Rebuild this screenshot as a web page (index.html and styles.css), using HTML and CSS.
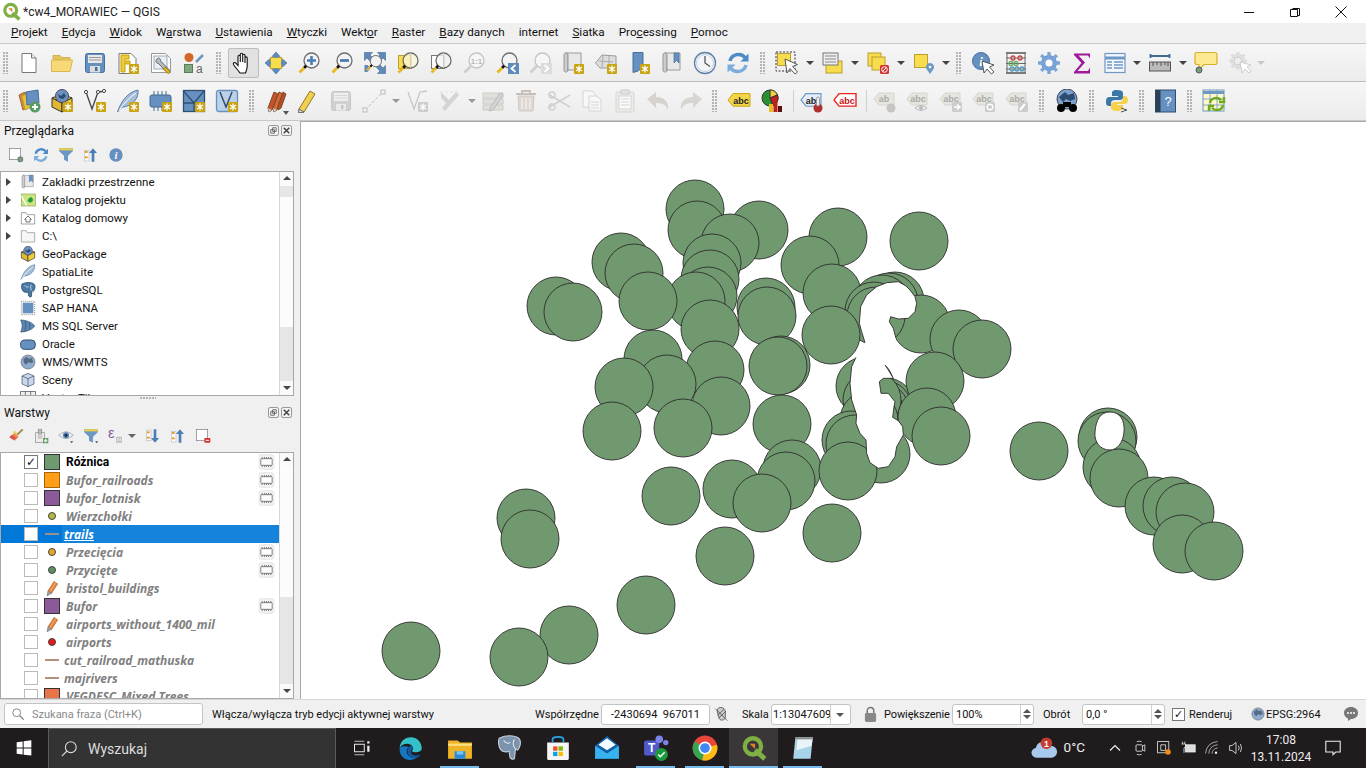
FILE: index.html
```html
<!DOCTYPE html>
<html lang="pl">
<head>
<meta charset="utf-8">
<title>*cw4_MORAWIEC — QGIS</title>
<link rel="stylesheet" href="styles.css">
</head>
<body>
<svg class="defs" viewBox="0 0 24 24" aria-hidden="true"><defs>
<g id="badge"><rect x="13" y="13" width="10" height="10" rx="1" fill="#c8a415"/><path d="M18 14.5v7M15 16l6 4M21 16l-6 4" stroke="#fff" stroke-width="1.3"/></g>
<g id="new"><path d="M5 2.5h9.5l4.500 4.500v14.500H5z" fill="#fff" stroke="#777"/><path d="M14.5 2.5V7H19" fill="#eee" stroke="#777"/></g>
<g id="open"><path d="M3 8V4.5h7l2 2h8V10z" fill="#e6c65c" stroke="#d0b050"/><path d="M1.5 20.5V9h21l-2.500 11.500z" fill="#f7d978" stroke="#dab94e"/></g>
<g id="save"><rect x="2.5" y="2.5" width="19" height="19" rx="2" fill="#6590c0" stroke="#44709f"/><rect x="5" y="4" width="14" height="8" fill="#e8e8e8"/><path d="M6 6.500h12M6 9h12" stroke="#999"/><rect x="7" y="15" width="10" height="6.500" fill="#ddd"/><rect x="12" y="16" width="2.500" height="4" fill="#44709f"/></g>
<g id="saveas"><path d="M3 2.500h12l5 5v15H3z" fill="#fff" stroke="#777"/><path d="M5 4h8v4H9v13H5z" fill="#f0c93f" stroke="#c9a200"/><path d="M10 10h4v3h-4z" fill="#f0c93f" stroke="#c9a200"/><use href="#badge"/></g>
<g id="props"><path d="M2.500 2.500h14l5 5v14h-19z" fill="#fff" stroke="#999"/><rect x="5" y="5" width="13" height="13" fill="#eaf0f8" stroke="#9ab"/><path d="M8 8c2-2 4 0 3.500 2l9 9-2 3-9-9.500C7.500 13 6 10 8 8z" fill="#bbb" stroke="#666"/><path d="M16 16l5 5-1.500 2-5-5z" fill="#e8b820" stroke="#a80"/></g>
<g id="style"><circle cx="7" cy="6.500" r="4.500" fill="#d4662b"/><path d="M14 11l7-7" stroke="#6d97c4" stroke-width="2.500"/><rect x="2.500" y="13.500" width="8" height="8" fill="#80a880" stroke="#5a7a5a"/><text x="14" y="22" class="svgt" font-size="12" fill="#666">a</text></g>
<g id="pan"><path d="M9 22c-2-3-5-6-6.500-8.500-.7-1.500 1-2.700 2.200-1.500L7 14.500V5.500c0-1.600 2.300-1.600 2.300 0V11 3.500c0-1.600 2.400-1.600 2.400 0V11 4.500c0-1.600 2.300-1.600 2.300 0V12 7c0-1.500 2.200-1.500 2.200 0v8c0 3-.8 4.500-1.700 7z" fill="#fff" stroke="#111" stroke-width="1.100"/></g>
<g id="pansel"><rect x="6.500" y="6.500" width="11" height="11" fill="#f7dc4e" stroke="#b9a030"/><path d="M12 1l4 4.500H8zM12 23l4-4.500H8zM1 12l4.500-4v8zM23 12l-4.500-4v8z" fill="#5e8abb" stroke="#3f6a9a" stroke-width=".6"/><path d="M10.500 5h3v2h-3zM10.500 17h3v2h-3zM5 10.500h2v3H5zM17 10.500h2v3h-2z" fill="#5e8abb"/></g>
<g id="lens"><circle cx="14.500" cy="9.500" r="7.500" fill="#f3f3f3" stroke="#6e6e6e" stroke-width="1.300"/><path d="M9.200 14.800L7 17" stroke="#111" stroke-width="2.800"/><path d="M7 17L2.500 21.500" stroke="#e8b820" stroke-width="2.800"/></g>
<g id="lensg"><circle cx="14.500" cy="9.500" r="7.500" fill="#f6f6f6" stroke="#c4c4c4" stroke-width="1.300"/><path d="M9.200 14.800L2.500 21.500" stroke="#cfcfcf" stroke-width="2.800"/></g>
<g id="zin"><use href="#lens"/><path d="M14.500 5v9M10 9.500h9" stroke="#4a7fb5" stroke-width="2.600"/></g>
<g id="zout"><use href="#lens"/><path d="M10 9.500h9" stroke="#4a7fb5" stroke-width="2.800"/></g>
<g id="zfull"><path d="M1.500 1.500h8L7 4l3.500 3.500-3 3L4 7 1.500 9.500zM22.500 1.500h-8L17 4l-3.500 3.500 3 3L20 7l2.500 2.500zM22.500 22.500h-8L17 20l-3.500-3.500 3-3L20 17l2.500-2.500z" fill="#5e8abb" stroke="#3f6a9a" stroke-width=".6"/><path d="M1.500 14h3l3 3-3 4H1.500z" fill="#5e8abb"/><g transform="translate(2 3) scale(.75)"><use href="#lens"/></g></g>
<g id="zsel"><rect x="2.500" y="4.500" width="13" height="13" fill="#f7dc4e" stroke="#b9a030"/><circle cx="14.500" cy="9.500" r="7.500" fill="#fbf6d8" fill-opacity=".8" stroke="#6e6e6e" stroke-width="1.300"/><path d="M14.500 2v15" stroke="#ccc"/><path d="M9.200 14.800L7 17" stroke="#111" stroke-width="2.800"/><path d="M7 17L2.500 21.500" stroke="#e8b820" stroke-width="2.800"/></g>
<g id="zlay"><rect x="2.500" y="4.500" width="13" height="13" fill="#fff" stroke="#777"/><circle cx="14.500" cy="9.500" r="7.500" fill="#f3f3f3" fill-opacity=".8" stroke="#6e6e6e" stroke-width="1.300"/><path d="M14.500 2v15" stroke="#ccc"/><path d="M9.200 14.800L7 17" stroke="#111" stroke-width="2.800"/><path d="M7 17L2.500 21.500" stroke="#e8b820" stroke-width="2.800"/></g>
<g id="z11"><use href="#lensg"/><text x="14.500" y="12.500" class="svgt b7" text-anchor="middle" fill="#bbb">1:1</text></g>
<g id="zlast"><use href="#lens"/><rect x="13" y="12" width="11" height="11" fill="#5e8abb"/><path d="M20.500 14l-4 3.500 4 3.500" fill="none" stroke="#fff" stroke-width="1.800"/></g>
<g id="znext"><use href="#lensg"/><rect x="13" y="12" width="11" height="11" fill="#dcdcdc"/><path d="M16.500 14l4 3.500-4 3.500" fill="none" stroke="#fff" stroke-width="1.800"/></g>
<g id="scroll"><path d="M3 4c0-3 4-3 4 0v15c0 2-2 3-4 1z" fill="#ccc" stroke="#999"/><path d="M5 2h15v17H6c2 0 1-1 1-1V4c0-2-2-2-2-2z" fill="#e8e8e8" stroke="#999"/></g>
<g id="bnew"><use href="#scroll"/><use href="#badge"/></g>
<g id="bmap"><path d="M1.500 12L8 4l14 1v12H6z" fill="#ddd" stroke="#999"/><path d="M5 10l14 1M9 5l-1 11M15 5v11" stroke="#aaa"/><use href="#badge"/></g>
<g id="bflag"><path d="M6 1.500h10V16l-5 4-5 1.500z" fill="#6590c0" stroke="#44709f"/><use href="#badge"/></g>
<g id="bshow"><use href="#scroll"/><path d="M14 2h5v10l-2.500-2.500L14 12z" fill="#6590c0" stroke="#44709f" stroke-width=".7"/></g>
<g id="clock"><circle cx="12" cy="12" r="10.500" fill="#f3f5f8" stroke="#5b7fa5" stroke-width="1.300"/><circle cx="12" cy="12" r="8.500" fill="none" stroke="#c5d2e0"/><path d="M12 5v7l5 3.500" fill="none" stroke="#555" stroke-width="1.300"/></g>
<g id="refresh"><path d="M4 10c1.500-7 11-9 15.500-3" fill="none" stroke="#4d8bc8" stroke-width="3.500"/><path d="M22.500 2.500v8h-8z" fill="#4d8bc8"/><path d="M20 14c-1.500 7-11 9-15.500 3" fill="none" stroke="#7daedb" stroke-width="3.500"/><path d="M1.500 21.500v-8h8z" fill="#7daedb"/></g>
<g id="sel"><rect x="1" y="1" width="19" height="19" fill="none" stroke="#333" stroke-dasharray="2 1.500"/><rect x="2.500" y="2.500" width="13" height="12" fill="#f7dc4e" stroke="#b9a030"/><path d="M10 8l2 14 3-4.500 5 5.500 2.500-2-5-5.500 5-2z" fill="#fff" stroke="#444" stroke-width=".9"/></g>
<g id="selform"><rect x="5" y="10" width="16" height="12" fill="#f7dc4e" stroke="#b9a030"/><rect x="2" y="2" width="15" height="12" fill="#eee" stroke="#777"/><path d="M4 5h11M4 8h11M4 11h11" stroke="#888"/></g>
<g id="desel"><rect x="2" y="2" width="13" height="13" fill="#f7dc4e" stroke="#b9a030"/><rect x="6" y="6" width="13" height="13" fill="#f7dc4e" stroke="#b9a030"/><rect x="14" y="14" width="9" height="9" rx="1.500" fill="#d5332f"/><circle cx="18.500" cy="18.500" r="2.800" fill="none" stroke="#fff"/><path d="M16.500 20.500l4-4" stroke="#fff"/></g>
<g id="selloc"><rect x="2.500" y="3.500" width="13" height="13" fill="#f7dc4e" stroke="#b9a030"/><path d="M18 23l-3.500-5a4 4 0 1 1 7 0z" fill="#6d97c4"/><circle cx="18" cy="16" r="1.300" fill="#fff"/></g>
<g id="ident"><circle cx="10" cy="10" r="8.500" fill="#6590c0" stroke="#44709f"/><text x="10" y="14.500" class="svgt i12" text-anchor="middle" fill="#fff">i</text><path d="M11 10l2 12 3-4 4.500 5 2.500-2-4.500-5 4.500-2z" fill="#fff" stroke="#444" stroke-width=".9"/></g>
<g id="abacus"><path d="M2 2h20M2 22h20" stroke="#555" stroke-width="1.500"/><path d="M3 2v20M21 2v20M2 7h20M2 12.500h20M2 18h20" stroke="#666"/><g fill="none" stroke-width="1.300"><circle cx="9" cy="7" r="2" stroke="#c44"/><circle cx="16" cy="7" r="2" stroke="#c44"/><circle cx="7" cy="12.500" r="2" stroke="#6a6"/><circle cx="12" cy="12.500" r="2" stroke="#6a6"/><circle cx="8" cy="18" r="2" stroke="#59b"/><circle cx="13" cy="18" r="2" stroke="#59b"/><circle cx="18" cy="18" r="2" stroke="#59b"/></g></g>
<g id="gear"><circle cx="12" cy="12" r="7.500" fill="#7aa3d8" stroke="#6a93c8"/><path d="M12 1v22M1 12h22M4.200 4.200l15.600 15.600M19.800 4.200L4.200 19.800" stroke="#7aa3d8" stroke-width="3.300"/><circle cx="12" cy="12" r="3.500" fill="#fff"/></g>
<g id="sigma"><path d="M4 2.500h16v5l-2-3H8.500l6.500 7-7.500 8.500H18l2-3.500v6H4v-1.500l7.500-9L4 4z" fill="#a0179c"/></g>
<g id="table"><rect x="2" y="2.500" width="20" height="19" fill="#f4f8fc" stroke="#6d97c4" stroke-width="1.200"/><path d="M2 7h20" stroke="#6d97c4" stroke-width="3"/><path d="M4 11h5M11 11h9M4 14h5M11 14h9M4 17h5M11 17h9" stroke="#6d97c4" stroke-width="1.300"/></g>
<g id="ruler"><path d="M2.500 5h19M2.500 3v4M21.500 3v4" stroke="#44688f" stroke-width="1.800"/><rect x="1.500" y="11" width="21" height="9" fill="#bbb" stroke="#555"/><path d="M5 11v4M9 11v3M13 11v4M17 11v3M20 11v4" stroke="#555"/></g>
<g id="bubble"><path d="M3 1.500h18q2 0 2 2v8q0 2-2 2H10l-5 5v-5H3q-2 0-2-2v-8q0-2 2-2z" fill="#fde992" stroke="#d8b030" stroke-width="1.200"/><circle cx="5" cy="19" r="3" fill="#75a070" stroke="#557"/></g>
<g id="gearg"><circle cx="11" cy="10" r="6.500" fill="#eee" stroke="#ccc"/><path d="M11 1v18M2 10h18M4.500 3.500l13 13M17.500 3.500l-13 13" stroke="#ddd" stroke-width="3"/><circle cx="11" cy="10" r="4" fill="#eee" stroke="#ccc"/><path d="M13 11l2 11 3-4 4 4 2-2-4-4 4-2z" fill="#fff" stroke="#ccc"/></g>
<g id="addlay"><path d="M2 6l6-3 4 15-6 3z" fill="#d38a3a" stroke="#a5652a"/><path d="M5 7l7-3 2 14-6 3z" fill="#e9c23c" stroke="#b9a030"/><path d="M9 3l12-2 1 13-12 2z" fill="#6590c0" stroke="#44709f"/><circle cx="18" cy="18" r="5.500" fill="#5a9a64"/><path d="M18 15v6M15 18h6" stroke="#fff" stroke-width="1.800"/></g>
<g id="gpkg"><path d="M2 9l10-4 10 4-10 5z" fill="#f7dc4e" stroke="#333"/><path d="M2 9v9l10 5V14z" fill="#e2b92e" stroke="#333"/><path d="M22 9v9l-10 5V14z" fill="#f2d03c" stroke="#333"/><circle cx="12" cy="7" r="6.500" fill="#6e92c0" stroke="#446"/><path d="M8 5l3 2 3-3 2 3-3 3-4-1z" fill="#2d4a70"/></g>
<g id="vtx"><path d="M3 3l6 17 6-17 7-1" fill="none" stroke="#444" stroke-width="1.300"/><g fill="#fff" stroke="#444"><circle cx="3" cy="3" r="1.600"/><circle cx="15" cy="3" r="1.600"/><circle cx="21" cy="2" r="1.600"/></g><use href="#badge"/></g>
<g id="feather"><path d="M1.500 23C5 12 12 3 22 1c1 8-5 16-15 17-1 0-3 2-5.500 5z" fill="#a5bdd8" stroke="#5b7fa5"/><path d="M3 21.500C8 14 13 9 20 4" stroke="#fff" fill="none"/></g>
<g id="spatial"><use href="#feather"/><use href="#badge"/></g>
<g id="chip"><path d="M5 2v20M9 2v20M13 2v20M17 2v20" stroke="#44688f"/><rect x="1" y="6" width="21" height="12" rx="2" fill="#6590c0" stroke="#44688f"/></g>
<g id="chipb"><use href="#chip"/><use href="#badge"/></g>
<g id="grid"><rect x="1.500" y="1.500" width="21" height="21" fill="#6590c0" stroke="#2f4f70" stroke-width="1.300"/><path d="M1.500 14h21M12 14v8M1.500 2l10.500 12M12 14L22 2" stroke="#2f4f70" stroke-width="1.300"/><use href="#badge"/></g>
<g id="vtxbox"><rect x="1.500" y="1.500" width="21" height="21" rx="2" fill="#bcd0e6" stroke="#6590c0" stroke-width="1.300"/><path d="M5 3l6 15 6-15" fill="none" stroke="#2f4f70" stroke-width="1.500"/><use href="#badge"/></g>
<g id="pencils"><g stroke="#7a4a2a"><path d="M4 19L10 3l4 2-6 16-3 2z" fill="#c8522b"/><path d="M9 19L15 3l4 2-6 16-3 2z" fill="#d9692f"/><path d="M14 17L19 3l3 2-5 14-3 2z" fill="#b84a28"/></g><path d="M4 19l1 4 3-2zM9 19l1 4 3-2z" fill="#ccc"/></g>
<g id="pencil"><path d="M3 20L14 2l5 3-11 18-5 1z" fill="#f0cf52" stroke="#907a20"/><path d="M3 20l-.5 4 5.500-1z" fill="#ddd" stroke="#666"/></g>
<g id="line"><path d="M3 21L21 3" stroke="#bbb" stroke-dasharray="3 2"/><rect x="1" y="19" width="4" height="4" fill="#f4f4f4" stroke="#bbb"/><rect x="19" y="1" width="4" height="4" fill="#f4f4f4" stroke="#bbb"/></g>
<g id="vtxg"><path d="M3 3l6 17 6-17 7-1" fill="none" stroke="#c8c8c8" stroke-width="1.300"/><rect x="13" y="13" width="10" height="10" rx="1" fill="#ccc"/><path d="M18 14.500v7M15 16l6 4M21 16l-6 4" stroke="#fff" stroke-width="1.300"/></g>
<g id="tools"><path d="M3 3l9 9-3 3-6-6z" fill="#d4d4d4"/><path d="M18 3l-14 16 3 3 14-16z" fill="#d4d4d4"/><path d="M2 3h18" stroke="#ddd" stroke-dasharray="3 2"/></g>
<g id="edit"><path d="M2 4h20v5H2zM2 10h20v5H2zM2 16h20v5H2z" fill="#e0e0d8" stroke="#ccc"/><path d="M9 19l10-15 3 2-10 15-4 1z" fill="#d4d4d4" stroke="#bbb"/></g>
<g id="trash"><path d="M2 5h20M8 5V2h8v3" fill="none" stroke="#c8c0b8" stroke-width="1.800"/><path d="M4 7h16l-1 15H5z" fill="#e0d8d0" stroke="#ccc"/><path d="M8 9v11M12 9v11M16 9v11" stroke="#f0f0f0" stroke-width="1.300"/></g>
<g id="scissors"><path d="M1 5l22 13M1 19L23 6" stroke="#d0d0d0" stroke-width="1.600"/><circle cx="5" cy="6" r="3" fill="none" stroke="#d0d0d0" stroke-width="1.400"/><circle cx="5" cy="18" r="3" fill="none" stroke="#d0d0d0" stroke-width="1.400"/></g>
<g id="copy"><path d="M3 2h9l3 3v13H3z" fill="#f8f8f8" stroke="#d4d4d4"/><path d="M9 7h8l4 4v11H9z" fill="#f8f8f8" stroke="#d4d4d4"/><path d="M11 13h8M11 16h8M11 19h8" stroke="#d4d4d4"/></g>
<g id="paste"><rect x="3" y="3" width="18" height="20" rx="1.500" fill="#ecece4" stroke="#d4d4d4"/><rect x="8" y="1" width="8" height="4" fill="#e4e4e4" stroke="#ccc"/><rect x="6" y="7" width="12" height="13" fill="#fafafa" stroke="#d4d4d4"/><path d="M8 10h8M8 13h8M8 16h8" stroke="#d4d4d4"/></g>
<g id="undo"><path d="M1 10L10 3v5c8 0 13 4 12 13-2-5-5-7-12-7v5z" fill="#d6d3cf"/></g>
<g id="redo"><path d="M23 10L14 3v5C6 8 1 12 2 21c2-5 5-7 12-7v5z" fill="#d8d4d0"/></g>
<g id="lblY"><path d="M6 4h17v14H6L1 11z" fill="#f3d54a" stroke="#c9a200" transform="translate(0 1) scale(1 .9)"/><text x="14" y="15" class="svgt b9" text-anchor="middle" fill="#222">abc</text></g>
<g id="lblR"><path d="M6 4h17v14H6L1 11z" fill="#fff" stroke="#e22" stroke-width="1.400" transform="translate(0 1) scale(1 .9)"/><text x="14" y="15" class="svgt b9" text-anchor="middle" fill="#c11">abc</text></g>
<g id="lblB"><path d="M6 4h15v14H6L1 11z" fill="#e5eef8" stroke="#6d97c4" stroke-width="1.200" transform="translate(0 1) scale(1 .9)"/><text x="11" y="15" class="svgt b9" text-anchor="middle" fill="#222">ab</text><circle cx="18" cy="19" r="4.500" fill="#b0302e"/><rect x="16.500" y="8" width="3" height="9" rx="1.500" fill="#eee" stroke="#999"/></g>
<g id="pie"><circle cx="10" cy="9" r="8" fill="#2a9030" stroke="#333"/><path d="M10 9V1a8 8 0 0 1 7.500 5z" fill="#f0d040" stroke="#333"/><path d="M10 9l7.500-3A8 8 0 0 1 13 16.500z" fill="#c02020" stroke="#333"/><rect x="9" y="15" width="4" height="8" fill="#e8c020"/><rect x="13.500" y="11" width="4" height="12" fill="#c02020"/><rect x="18" y="17" width="4" height="6" fill="#5a1010"/></g>
<g id="lblG"><path d="M6 4h15v12H6L1 10z" fill="#e6e6de" stroke="#d4d4cc"/><text x="12" y="13" class="svgt b9" text-anchor="middle" fill="#aaa">abc</text></g>
<g id="lblG1"><path d="M6 4h15v12H6L1 10z" fill="#e6e6de" stroke="#d4d4cc"/><text x="11" y="13" class="svgt b9" text-anchor="middle" fill="#aaa">ab</text><circle cx="18" cy="19" r="4.500" fill="#c8c4c0"/></g>
<g id="lblG2"><use href="#lblG"/><path d="M9 19q6-5 12 0-6 5-12 0z" fill="#eee" stroke="#bbb"/><circle cx="15" cy="19" r="2" fill="#bbb"/></g>
<g id="lblG3"><use href="#lblG"/><rect x="13" y="13" width="10" height="10" rx="1.500" fill="#ccc"/><path d="M15 18h5M18 15.500l3 2.500-3 2.500" fill="none" stroke="#fff" stroke-width="1.600"/></g>
<g id="lblG4"><use href="#lblG"/><rect x="13" y="13" width="10" height="10" rx="1.500" fill="#ccc"/><circle cx="18" cy="18" r="2.800" fill="none" stroke="#fff" stroke-width="1.400"/></g>
<g id="lblG5"><use href="#lblG"/><rect x="13" y="13" width="10" height="10" rx="1.500" fill="#ccc"/><path d="M15 21l5-6" stroke="#fff" stroke-width="2"/></g>
<g id="binoc"><circle cx="12" cy="10" r="10" fill="#7ca0cc" stroke="#445"/><path d="M4 8l6-5 3 3 6-2 1 6-5 2-4-2-3 3z" fill="#2d4a70"/><circle cx="6" cy="19" r="4" fill="#000"/><circle cx="18" cy="19" r="4" fill="#000"/><rect x="8" y="13" width="8" height="5" fill="#000"/></g>
<g id="python"><path d="M12 1c-5 0-5 2-5 3v3h6v1H4c-3 0-3 4-3 5s0 4 3 4h2v-3c0-2 2-3 4-3h5c2 0 3-1 3-3V4c0-2-2-3-6-3z" fill="#3b78a8"/><path d="M12 22c5 0 6-2 6-3v-3h-6v-1h8c3 0 3-4 3-4s0-4-3-4h-2v3c0 2-2 3-4 3h-4c-2 0-4 1-4 3v3c0 2 2 3 6 3z" fill="#f6d24c"/><path d="M16 19l6 2-6 2" fill="none" stroke="#555"/></g>
<g id="help"><rect x="1.500" y="1" width="20" height="22" fill="#6590c0" stroke="#2f4f70"/><rect x="1.500" y="1" width="5" height="22" fill="#2b3f55"/><text x="14" y="17" class="svgt" font-size="13" text-anchor="middle" fill="#fff">?</text></g>
<g id="tblsync"><rect x="1" y="1" width="21" height="21" fill="#fff6cc" stroke="#6d97c4"/><path d="M1 3.500h21" stroke="#6d97c4" stroke-width="3"/><path d="M1 10h21M1 16h21M8 1v21M15 1v21" stroke="#6d97c4" stroke-width=".8"/><path d="M8 14c1-6 8-6 11-3M22 8v5h-5M21 16c-1 6-8 6-11 3M7 22v-5h5" fill="none" stroke="#6cab1d" stroke-width="2.400"/></g>
<g id="newgeo"><rect x="2" y="2" width="17" height="17" fill="#fff" stroke="#777"/><rect x="15" y="15" width="7" height="7" rx="2" fill="#75a070" stroke="#557"/></g>
<g id="filter"><path d="M1.500 2h21v4L15 13v9l-6-3v-6L1.500 6z" fill="#6d97c4"/><path d="M1.500 2h21v3h-21z" fill="#f0d040"/></g>
<g id="collapse"><rect x="2" y="5" width="7" height="16" fill="#fff" stroke="#bbb"/><rect x="3" y="6" width="4" height="3" fill="#e89a30"/><rect x="3" y="14" width="4" height="3" fill="#e89a30"/><path d="M15 2l6 7h-4v13h-4V9H9z" fill="#4a7fb5"/></g>
<g id="expand"><rect x="2" y="3" width="7" height="16" fill="#fff" stroke="#bbb"/><rect x="3" y="5" width="4" height="3" fill="#e89a30"/><rect x="3" y="13" width="4" height="3" fill="#e89a30"/><path d="M15 22l6-7h-4V2h-4v13H9z" fill="#4a7fb5"/></g>
<g id="info"><circle cx="12" cy="12" r="10" fill="#6590c0"/><text x="12" y="17.500" class="svgt i15" text-anchor="middle" fill="#fff">i</text></g>
<g id="brush"><path d="M2 14l8-7 6 6-6 6z" fill="#e8884a"/><path d="M2 14l4-4 6 5-3 3z" fill="#e05050"/><path d="M7 6l3-2 5 5-2 2z" fill="#e8d060"/><path d="M14 10L22 2" stroke="#a8864a" stroke-width="3"/></g>
<g id="addgrp"><rect x="4" y="7" width="13" height="15" fill="#eee" stroke="#888"/><path d="M8 2h5v7H8z" fill="#bbb" stroke="#888"/><path d="M7 12h7M7 15h7" stroke="#888"/><rect x="15" y="15" width="8" height="8" fill="#6aa06a"/><path d="M19 16.500v5M16.500 19h5" stroke="#fff" stroke-width="1.600"/></g>
<g id="eye"><path d="M1 11q11-11 22 0-11 10-22 0z" fill="#e8eef5" stroke="#999"/><circle cx="12" cy="11" r="4.500" fill="#4a7fb5"/><circle cx="12" cy="11" r="2" fill="#223"/><path d="M18 20h5l-2.500 3z" fill="#555"/></g>
<g id="filtd"><use href="#filter"/><path d="M18 20h5l-2.500 3z" fill="#555"/></g>
<g id="eps"><text x="0" y="15" class="svgt eps" fill="#8a5a9a">ε</text><rect x="12" y="13" width="9" height="9" rx="1" fill="#bbb"/><path d="M14 15v5M16.500 15v5M19 15v5" stroke="#fff"/></g>
<g id="remlay"><rect x="2" y="2" width="17" height="17" fill="#fff" stroke="#777"/><rect x="14" y="15" width="9" height="7" rx="1" fill="#d5332f"/><path d="M16 18.500h5" stroke="#fff" stroke-width="1.500"/></g>
<g id="folder"><path d="M2 4h7l2 3h11v14H2z" fill="#f6f6f6" stroke="#888"/></g>
<g id="home"><path d="M2 4h7l2 3h11v14H2z" fill="#fff" stroke="#777"/><path d="M12 9l-5 5h2v4h6v-4h2z" fill="#fff" stroke="#333"/></g>
<g id="proj"><rect x="2" y="3" width="21" height="18" fill="#cbe382" stroke="#8aa54a"/><path d="M2 6l8 14" stroke="#fff" stroke-width="2"/><path d="M13 10q4-4 6 0t-4 6l-4-3z" fill="#1f9a3a"/></g>
<g id="elephant"><path d="M3 3c6-3 14-3 18 0 3 3 1 9-1 11l-2-1-1 9c-2 1-3 0-4-1l-1-6c-2 1-6 1-8-2-2-3-2-8-1-10z" fill="#4a7ba8" stroke="#1d3650"/><path d="M17 4c-2 3-1 7 1 9M7 5c2 3 4 3 6 2" fill="none" stroke="#fff"/></g>
<g id="elephantg"><path d="M3 3c6-3 14-3 18 0 3 3 1 9-1 11l-2-1-1 9c-2 1-3 0-4-1l-1-6c-2 1-6 1-8-2-2-3-2-8-1-10z" fill="#7b93ad" stroke="#c8d2dc"/><path d="M17 4c-2 3-1 7 1 9M7 5c2 3 4 3 6 2" fill="none" stroke="#dde4ea"/></g>
<g id="hana"><rect x="4" y="4" width="16" height="16" fill="#6590c0"/><rect x="2" y="2" width="20" height="20" fill="none" stroke="#555" stroke-dasharray="1.500 1.500"/></g>
<g id="mssql"><path d="M1 3c7 0 17 3 21 9-4 6-14 9-21 9 3-6 3-12 0-18z" fill="#5f87b5" stroke="#2f4f70"/><path d="M7 4c2 5 2 11 0 16M14 7c1 3 1 7 0 10" fill="none" stroke="#2f4f70"/></g>
<g id="oracle"><rect x="1" y="6" width="22" height="14" rx="6" fill="#6590c0" stroke="#2f4f70" stroke-width="1.500"/></g>
<g id="wms"><circle cx="12" cy="12" r="10.500" fill="#8fabcf" stroke="#666"/><path d="M5 8l5-4 3 3 5-1 2 6-4 2-3-2-4 4-3-3z" fill="#556a85"/></g>
<g id="cube"><path d="M12 2l9 4v12l-9 4-9-4V6z" fill="#c8d8ea" stroke="#446"/><path d="M3 6l9 4 9-4M12 10v12" fill="none" stroke="#446"/></g>
<g id="vt"><rect x="1" y="2" width="22" height="7" fill="#eee" stroke="#445"/><path d="M8 2v7M16 2v7" stroke="#445"/></g>
<g id="edpen"><path d="M15 1.500l5.500 3.500-9 14-5.500-3.500z" fill="#e8833a" stroke="#a5652a"/><path d="M17.500 3L8.500 17.500" stroke="#f5c9a0"/><path d="M6 15.500l5.500 3.500L4.500 23z" fill="#a0a0a0" stroke="#777"/></g>
<g id="mem"><rect x="1" y="1" width="22" height="22" rx="3" fill="#f2f2f2" stroke="#ddd"/><path d="M5.500 4.500v3M9 4.500v3M12 4.500v3M15 4.500v3M18.500 4.500v3M5.500 16.500v3M9 16.500v3M12 16.500v3M15 16.500v3M18.500 16.500v3" stroke="#666" stroke-width="1.200"/><rect x="3.500" y="7" width="17" height="10" rx="1" fill="#fdfdfd" stroke="#666" stroke-width="1.200"/></g>
<g id="edge"><path d="M22 13c0-6-4-11-10-11C6 2 2 6 1.500 12c3-5 10-5 12-1 1 2 0 3-1 4 2 1 8 2 9.500-2z" fill="#35c1c8"/><path d="M1.500 12C1 18 5 23 11 23c2 0 4-.5 6-2-5 1-9-2-9-6 0-2 1-3 2-4-3-1-7-1-8.500 1z" fill="#1577c2"/><path d="M10 11c-2 3-2 8 3 10 3 1 6 0 8-3-4 2-9 1-9-3 0-2 2-2 2-4-1-1-3-1-4 0z" fill="#0e5aa5"/></g>
<g id="fold"><path d="M1 5h9l2 2h11v15H1z" fill="#f0b429"/><path d="M1 8h22v2H1z" fill="#fcdf7e"/><rect x="7" y="15" width="10" height="7" fill="#2a8ad8"/><rect x="9" y="15" width="6" height="3" fill="#7bc3f2"/></g>
<g id="store"><path d="M2 7h20v15a1 1 0 0 1-1 1H3a1 1 0 0 1-1-1z" fill="#f5f5f5"/><path d="M7 7V4c0-3 10-3 10 0v3" fill="none" stroke="#2aa4e8" stroke-width="1.600"/><rect x="7.500" y="10.500" width="4" height="4" fill="#f25022"/><rect x="12.500" y="10.500" width="4" height="4" fill="#7fba00"/><rect x="7.500" y="15.500" width="4" height="4" fill="#00a4ef"/><rect x="12.500" y="15.500" width="4" height="4" fill="#ffb900"/></g>
<g id="mail"><path d="M12 1l11 9v12H1V10z" fill="#0f5fa8"/><path d="M1 10l11 7 11-7v12H1z" fill="#39b3ee"/><path d="M4 9l8-6 8 6-8 5z" fill="#f2fbff"/></g>
<g id="teams"><rect x="1" y="5" width="14" height="14" rx="2" fill="#5059c9"/><text x="8" y="16" class="svgt b11" text-anchor="middle" fill="#fff">T</text><circle cx="15" cy="4" r="3.500" fill="#7b83eb"/><circle cx="21" cy="7" r="2.500" fill="#7b83eb"/><circle cx="17" cy="18" r="6" fill="#1b9a3c"/><path d="M14 18l2 2 4-4" fill="none" stroke="#fff" stroke-width="1.400"/></g>
<g id="chrome"><circle cx="12" cy="12" r="11.500" fill="#e8453c"/><path d="M12 12L2.500 6a11.500 11.500 0 0 0 7 17.300z" fill="#31a753"/><path d="M12 12l11-3a11.500 11.500 0 0 1-13.500 14.300z" fill="#f9bc15"/><circle cx="12" cy="12" r="6" fill="#fff"/><circle cx="12" cy="12" r="4.500" fill="#4285f4"/></g>
<g id="qgis"><circle cx="11" cy="10.500" r="7.500" fill="none" stroke="#7fb045" stroke-width="4"/><path d="M13 14l9 8" stroke="#7fb045" stroke-width="4.500"/><path d="M8 8l5 0 0 5z" fill="#e2832c"/></g>
<g id="note"><path d="M5 2h16l-2 20H3z" fill="#a7d4e8"/><path d="M7 2h14l-1 8L6 14z" fill="#e8f4f8"/><path d="M5 2h16v2H5z" fill="#888"/></g>
<g id="win"><path d="M1 3.500l9-1.300v9H1zM11.500 2l11.500-1.500v10.700H11.500zM1 12.800h9v9l-9-1.300zM11.500 12.800H23v10.500L11.500 22z" fill="#fff"/></g>
</defs></svg>

<header class="titlebar">
  <svg class="logo" viewBox="0 0 24 24"><use href="#qgis"/></svg>
  <span class="apptitle">*cw4_MORAWIEC — QGIS</span>
  <span class="winctl">
    <svg class="wc" viewBox="0 0 12 12"><path d="M1 6.500h10" stroke="#111"/></svg>
    <svg class="wc" viewBox="0 0 12 12"><path d="M3.500 2.500h7v7h-2M1.500 3.500h7v7h-7z" fill="#fff" stroke="#111"/></svg>
    <svg class="wc" viewBox="0 0 12 12"><path d="M.5.500l11 11M11.500.500l-11 11" stroke="#111"/></svg>
  </span>
</header>

<nav class="menubar">
  <span><u>P</u>rojekt</span><span><u>E</u>dycja</span><span><u>W</u>idok</span><span>W<u>a</u>rstwa</span><span><u>U</u>stawienia</span><span><u>W</u>tyczki</span><span>Wekt<u>o</u>r</span><span><u>R</u>aster</span><span><u>B</u>azy danych</span><span>internet</span><span><u>S</u>iatka</span><span>Pro<u>c</u>essing</span><span><u>P</u>omoc</span>
</nav>

<div class="toolbar">
  <span class="grip g-first"></span>
  <span class="b"><svg class="i" viewBox="0 0 24 24"><use href="#new"/></svg></span>
  <span class="b"><svg class="i" viewBox="0 0 24 24"><use href="#open"/></svg></span>
  <span class="b"><svg class="i" viewBox="0 0 24 24"><use href="#save"/></svg></span>
  <span class="b"><svg class="i" viewBox="0 0 24 24"><use href="#saveas"/></svg></span>
  <span class="b"><svg class="i" viewBox="0 0 24 24"><use href="#props"/></svg></span>
  <span class="b"><svg class="i" viewBox="0 0 24 24"><use href="#style"/></svg></span>
  <span class="grip g16"></span>
  <span class="b on"><svg class="i" viewBox="0 0 24 24"><use href="#pan"/></svg></span>
  <span class="b"><svg class="i" viewBox="0 0 24 24"><use href="#pansel"/></svg></span>
  <span class="b"><svg class="i" viewBox="0 0 24 24"><use href="#zin"/></svg></span>
  <span class="b"><svg class="i" viewBox="0 0 24 24"><use href="#zout"/></svg></span>
  <span class="b"><svg class="i" viewBox="0 0 24 24"><use href="#zfull"/></svg></span>
  <span class="b"><svg class="i" viewBox="0 0 24 24"><use href="#zsel"/></svg></span>
  <span class="b"><svg class="i" viewBox="0 0 24 24"><use href="#zlay"/></svg></span>
  <span class="b"><svg class="i" viewBox="0 0 24 24"><use href="#z11"/></svg></span>
  <span class="b"><svg class="i" viewBox="0 0 24 24"><use href="#zlast"/></svg></span>
  <span class="b"><svg class="i" viewBox="0 0 24 24"><use href="#znext"/></svg></span>
  <span class="b"><svg class="i" viewBox="0 0 24 24"><use href="#bnew"/></svg></span>
  <span class="b"><svg class="i" viewBox="0 0 24 24"><use href="#bmap"/></svg></span>
  <span class="b"><svg class="i" viewBox="0 0 24 24"><use href="#bflag"/></svg></span>
  <span class="b"><svg class="i" viewBox="0 0 24 24"><use href="#bshow"/></svg></span>
  <span class="b"><svg class="i" viewBox="0 0 24 24"><use href="#clock"/></svg></span>
  <span class="b"><svg class="i" viewBox="0 0 24 24"><use href="#refresh"/></svg></span>
  <span class="grip g16"></span>
  <span class="b"><svg class="i" viewBox="0 0 24 24"><use href="#sel"/></svg></span><span class="dd"></span>
  <span class="b"><svg class="i" viewBox="0 0 24 24"><use href="#selform"/></svg></span><span class="dd"></span>
  <span class="b"><svg class="i" viewBox="0 0 24 24"><use href="#desel"/></svg></span><span class="dd"></span>
  <span class="b"><svg class="i" viewBox="0 0 24 24"><use href="#selloc"/></svg></span><span class="dd"></span>
  <span class="grip g14"></span>
  <span class="b"><svg class="i" viewBox="0 0 24 24"><use href="#ident"/></svg></span>
  <span class="b"><svg class="i" viewBox="0 0 24 24"><use href="#abacus"/></svg></span>
  <span class="b"><svg class="i" viewBox="0 0 24 24"><use href="#gear"/></svg></span>
  <span class="b"><svg class="i" viewBox="0 0 24 24"><use href="#sigma"/></svg></span>
  <span class="b"><svg class="i" viewBox="0 0 24 24"><use href="#table"/></svg></span><span class="dd"></span>
  <span class="b"><svg class="i" viewBox="0 0 24 24"><use href="#ruler"/></svg></span><span class="dd"></span>
  <span class="b"><svg class="i" viewBox="0 0 24 24"><use href="#bubble"/></svg></span>
  <span class="b"><svg class="i" viewBox="0 0 24 24"><use href="#gearg"/></svg></span><span class="dd dd-off"></span>
</div>

<div class="toolbar toolbar2">
  <span class="grip g-first"></span>
  <span class="b"><svg class="i" viewBox="0 0 24 24"><use href="#addlay"/></svg></span>
  <span class="b"><svg class="i" viewBox="0 0 24 24"><use href="#gpkg"/><use href="#badge"/></svg></span>
  <span class="b"><svg class="i" viewBox="0 0 24 24"><use href="#vtx"/></svg></span>
  <span class="b"><svg class="i" viewBox="0 0 24 24"><use href="#spatial"/></svg></span>
  <span class="b"><svg class="i" viewBox="0 0 24 24"><use href="#chipb"/></svg></span>
  <span class="b"><svg class="i" viewBox="0 0 24 24"><use href="#grid"/></svg></span>
  <span class="b"><svg class="i" viewBox="0 0 24 24"><use href="#vtxbox"/></svg></span>
  <span class="grip g17"></span>
  <span class="b w31"><svg class="i" viewBox="0 0 24 24"><use href="#pencils"/></svg><span class="ov"></span></span>
  <span class="b"><svg class="i" viewBox="0 0 24 24"><use href="#pencil"/></svg></span>
  <span class="b"><svg class="i off" viewBox="0 0 24 24"><use href="#save"/></svg></span>
  <span class="b"><svg class="i" viewBox="0 0 24 24"><use href="#line"/></svg></span><span class="dd dd-m"></span>
  <span class="b"><svg class="i" viewBox="0 0 24 24"><use href="#vtxg"/></svg></span>
  <span class="b"><svg class="i" viewBox="0 0 24 24"><use href="#tools"/></svg></span><span class="dd dd-m"></span>
  <span class="b"><svg class="i" viewBox="0 0 24 24"><use href="#edit"/></svg></span>
  <span class="b"><svg class="i" viewBox="0 0 24 24"><use href="#trash"/></svg></span>
  <span class="b"><svg class="i" viewBox="0 0 24 24"><use href="#scissors"/></svg></span>
  <span class="b"><svg class="i" viewBox="0 0 24 24"><use href="#copy"/></svg></span>
  <span class="b"><svg class="i" viewBox="0 0 24 24"><use href="#paste"/></svg></span>
  <span class="b"><svg class="i" viewBox="0 0 24 24"><use href="#undo"/></svg></span>
  <span class="b"><svg class="i" viewBox="0 0 24 24"><use href="#redo"/></svg></span>
  <span class="grip g15"></span>
  <span class="b"><svg class="i" viewBox="0 0 24 24"><use href="#lblY"/></svg></span>
  <span class="b"><svg class="i" viewBox="0 0 24 24"><use href="#pie"/></svg></span>
  <span class="vsep"></span>
  <span class="b"><svg class="i" viewBox="0 0 24 24"><use href="#lblB"/></svg></span>
  <span class="b"><svg class="i" viewBox="0 0 24 24"><use href="#lblR"/></svg></span>
  <span class="vsep"></span>
  <span class="b"><svg class="i" viewBox="0 0 24 24"><use href="#lblG1"/></svg></span>
  <span class="b"><svg class="i" viewBox="0 0 24 24"><use href="#lblG2"/></svg></span>
  <span class="b"><svg class="i" viewBox="0 0 24 24"><use href="#lblG3"/></svg></span>
  <span class="b"><svg class="i" viewBox="0 0 24 24"><use href="#lblG4"/></svg></span>
  <span class="b"><svg class="i" viewBox="0 0 24 24"><use href="#lblG5"/></svg></span>
  <span class="grip g17"></span>
  <span class="b"><svg class="i" viewBox="0 0 24 24"><use href="#binoc"/></svg></span>
  <span class="grip g17"></span>
  <span class="b"><svg class="i" viewBox="0 0 24 24"><use href="#python"/></svg></span>
  <span class="grip g16"></span>
  <span class="b"><svg class="i" viewBox="0 0 24 24"><use href="#help"/></svg></span>
  <span class="grip g15"></span>
  <span class="b"><svg class="i" viewBox="0 0 24 24"><use href="#tblsync"/></svg></span>
</div>

<main class="main">
  <aside class="side">
    <section class="panel p-browser">
      <div class="ptitle"><span>Przeglądarka</span><span class="pbtns"><svg class="pb" viewBox="0 0 12 12"><rect x=".5" y=".5" width="11" height="11" rx="2" fill="#f4f4f4" stroke="#888"/><path d="M5 3h4v4H5zM3 5h4v4H3z" fill="none" stroke="#666"/></svg><svg class="pb" viewBox="0 0 12 12"><rect x=".5" y=".5" width="11" height="11" rx="2" fill="#f4f4f4" stroke="#888"/><path d="M3 3l6 6M9 3l-6 6" stroke="#444" stroke-width="1.700"/></svg></span></div>
      <div class="ptools">
        <svg class="t" viewBox="0 0 24 24"><use href="#newgeo"/></svg>
        <svg class="t" viewBox="0 0 24 24"><use href="#refresh"/></svg>
        <svg class="t" viewBox="0 0 24 24"><use href="#filter"/></svg>
        <svg class="t" viewBox="0 0 24 24"><use href="#collapse"/></svg>
        <svg class="t" viewBox="0 0 24 24"><use href="#info"/></svg>
      </div>
      <div class="listbox lb-browser">
        <ul class="tree">
          <li><span class="arrow"></span><svg class="ti" viewBox="0 0 24 24"><use href="#bshow"/></svg><span class="tl">Zakładki przestrzenne</span></li>
          <li><span class="arrow"></span><svg class="ti" viewBox="0 0 24 24"><use href="#proj"/></svg><span class="tl">Katalog projektu</span></li>
          <li><span class="arrow"></span><svg class="ti" viewBox="0 0 24 24"><use href="#home"/></svg><span class="tl">Katalog domowy</span></li>
          <li><span class="arrow"></span><svg class="ti" viewBox="0 0 24 24"><use href="#folder"/></svg><span class="tl">C:\</span></li>
          <li><span class="noarrow"></span><svg class="ti" viewBox="0 0 24 24"><use href="#gpkg"/></svg><span class="tl">GeoPackage</span></li>
          <li><span class="noarrow"></span><svg class="ti" viewBox="0 0 24 24"><use href="#feather"/></svg><span class="tl">SpatiaLite</span></li>
          <li><span class="noarrow"></span><svg class="ti" viewBox="0 0 24 24"><use href="#elephant"/></svg><span class="tl">PostgreSQL</span></li>
          <li><span class="noarrow"></span><svg class="ti" viewBox="0 0 24 24"><use href="#hana"/></svg><span class="tl">SAP HANA</span></li>
          <li><span class="noarrow"></span><svg class="ti" viewBox="0 0 24 24"><use href="#mssql"/></svg><span class="tl">MS SQL Server</span></li>
          <li><span class="noarrow"></span><svg class="ti" viewBox="0 0 24 24"><use href="#oracle"/></svg><span class="tl">Oracle</span></li>
          <li><span class="noarrow"></span><svg class="ti" viewBox="0 0 24 24"><use href="#wms"/></svg><span class="tl">WMS/WMTS</span></li>
          <li><span class="noarrow"></span><svg class="ti" viewBox="0 0 24 24"><use href="#cube"/></svg><span class="tl">Sceny</span></li>
          <li><span class="noarrow"></span><svg class="ti" viewBox="0 0 24 24"><use href="#vt"/></svg><span class="tl">Vector Tiles</span></li>
        </ul>
        <div class="sbar sb-b"><span class="up"></span><span class="track t1"></span><span class="thumb"></span><span class="track"></span><span class="down"></span></div>
      </div>
    </section>
    <div class="vsplit"></div>
    <section class="panel p-layers">
      <div class="ptitle"><span>Warstwy</span><span class="pbtns"><svg class="pb" viewBox="0 0 12 12"><rect x=".5" y=".5" width="11" height="11" rx="2" fill="#f4f4f4" stroke="#888"/><path d="M5 3h4v4H5zM3 5h4v4H3z" fill="none" stroke="#666"/></svg><svg class="pb" viewBox="0 0 12 12"><rect x=".5" y=".5" width="11" height="11" rx="2" fill="#f4f4f4" stroke="#888"/><path d="M3 3l6 6M9 3l-6 6" stroke="#444" stroke-width="1.700"/></svg></span></div>
      <div class="ptools pt-l">
        <svg class="t" viewBox="0 0 24 24"><use href="#brush"/></svg>
        <svg class="t" viewBox="0 0 24 24"><use href="#addgrp"/></svg>
        <svg class="t" viewBox="0 0 24 24"><use href="#eye"/></svg>
        <svg class="t" viewBox="0 0 24 24"><use href="#filtd"/></svg>
        <svg class="t" viewBox="0 0 24 24"><use href="#eps"/></svg><span class="dd dd-s"></span>
        <svg class="t" viewBox="0 0 24 24"><use href="#expand"/></svg>
        <svg class="t" viewBox="0 0 24 24"><use href="#collapse"/></svg>
        <svg class="t" viewBox="0 0 24 24"><use href="#remlay"/></svg>
      </div>
      <div class="listbox lb-layers">
        <ul class="layers">
          <li class="active"><span class="cb cb-on">✓</span><span class="sw c-green"></span><span class="ln">Różnica</span><svg class="mem" viewBox="0 0 24 24"><use href="#mem"/></svg></li>
          <li><span class="cb"></span><span class="sw c-orange"></span><span class="ln">Bufor_railroads</span><svg class="mem" viewBox="0 0 24 24"><use href="#mem"/></svg></li>
          <li><span class="cb"></span><span class="sw c-purple"></span><span class="ln">bufor_lotnisk</span><svg class="mem" viewBox="0 0 24 24"><use href="#mem"/></svg></li>
          <li><span class="cb"></span><span class="dotw"><i class="dot d-olive"></i></span><span class="ln">Wierzchołki</span></li>
          <li class="sel"><span class="cb"></span><span class="linew"><i class="lin"></i></span><span class="ln lnl">trails</span></li>
          <li><span class="cb"></span><span class="dotw"><i class="dot d-gold"></i></span><span class="ln">Przecięcia</span><svg class="mem" viewBox="0 0 24 24"><use href="#mem"/></svg></li>
          <li><span class="cb"></span><span class="dotw"><i class="dot d-green"></i></span><span class="ln">Przycięte</span><svg class="mem" viewBox="0 0 24 24"><use href="#mem"/></svg></li>
          <li><span class="cb"></span><span class="dotw"><svg class="ed" viewBox="0 0 24 24"><use href="#edpen"/></svg></span><span class="ln">bristol_buildings</span></li>
          <li><span class="cb"></span><span class="sw c-purple"></span><span class="ln">Bufor</span><svg class="mem" viewBox="0 0 24 24"><use href="#mem"/></svg></li>
          <li><span class="cb"></span><span class="dotw"><svg class="ed" viewBox="0 0 24 24"><use href="#edpen"/></svg></span><span class="ln">airports_without_1400_mil</span></li>
          <li><span class="cb"></span><span class="dotw"><i class="dot d-red"></i></span><span class="ln">airports</span></li>
          <li><span class="cb"></span><span class="linew"><i class="lin"></i></span><span class="ln lnl">cut_railroad_mathuska</span></li>
          <li><span class="cb"></span><span class="linew"><i class="lin"></i></span><span class="ln lnl">majrivers</span></li>
          <li><span class="cb"></span><span class="sw c-coral"></span><span class="ln">VEGDESC_Mixed Trees</span></li>
        </ul>
        <div class="sbar sb-l"><span class="up"></span><span class="thumb"></span><span class="track"></span><span class="down"></span></div>
      </div>
    </section>
  </aside>
  <div class="canvas">
    <svg class="mapsvg" viewBox="301 122 1065 577">
      <g class="blobs">
        <circle cx="695" cy="209" r="29"/><circle cx="759" cy="230" r="29"/><circle cx="697" cy="230" r="29"/><circle cx="730" cy="243" r="29"/><circle cx="838" cy="237" r="29"/><circle cx="919" cy="241" r="29"/><circle cx="621" cy="262" r="29"/><circle cx="634" cy="273" r="29"/><circle cx="712" cy="263" r="29"/><circle cx="710" cy="279" r="29"/><circle cx="708" cy="296" r="29"/><circle cx="696" cy="301" r="29"/><circle cx="648" cy="301" r="29"/><circle cx="810" cy="265" r="29"/><circle cx="766" cy="307" r="29"/><circle cx="767" cy="316" r="29"/><circle cx="832" cy="293" r="29"/><circle cx="556" cy="306" r="29"/><circle cx="573" cy="312" r="29"/><circle cx="710" cy="329" r="29"/><circle cx="895" cy="301" r="29"/><circle cx="889" cy="302" r="29"/><circle cx="882" cy="304" r="29"/><circle cx="921" cy="324" r="29"/><circle cx="874" cy="311" r="29"/><circle cx="876" cy="316" r="29"/><circle cx="831" cy="335" r="29"/><circle cx="959" cy="339" r="29"/><circle cx="982" cy="349" r="29"/><circle cx="653" cy="359" r="29"/><circle cx="715" cy="370" r="29"/><circle cx="781" cy="365" r="29"/><circle cx="778" cy="366" r="29"/><circle cx="667" cy="384" r="29"/><circle cx="624" cy="387" r="29"/><circle cx="721" cy="406" r="29"/><circle cx="612" cy="431" r="29"/><circle cx="683" cy="428" r="29"/><circle cx="782" cy="424" r="29"/><circle cx="865" cy="386" r="29"/><circle cx="886" cy="407" r="29"/><circle cx="883" cy="409" r="29"/><circle cx="880" cy="411" r="29"/><circle cx="875" cy="413" r="29"/><circle cx="872" cy="400" r="29"/><circle cx="869" cy="420" r="29"/><circle cx="881" cy="454" r="29"/><circle cx="851" cy="440" r="29"/><circle cx="855" cy="444" r="29"/><circle cx="935" cy="381" r="29"/><circle cx="927" cy="417" r="29"/><circle cx="941" cy="436" r="29"/><circle cx="1039" cy="451" r="29"/><circle cx="792" cy="469" r="29"/><circle cx="786" cy="481" r="29"/><circle cx="848" cy="471" r="29"/><circle cx="671" cy="496" r="29"/><circle cx="732" cy="489" r="29"/><circle cx="762" cy="503" r="29"/><circle cx="526" cy="518" r="29"/><circle cx="530" cy="539" r="29"/><circle cx="832" cy="533" r="29"/><circle cx="725" cy="556" r="29"/><circle cx="646" cy="605" r="29"/><circle cx="569" cy="635" r="29"/><circle cx="519" cy="657" r="29"/><circle cx="411" cy="651" r="29"/><circle cx="1108" cy="437" r="29"/><circle cx="1107" cy="441" r="29"/><circle cx="1112" cy="467" r="29"/><circle cx="1119" cy="478" r="29"/><circle cx="1154" cy="506" r="29"/><circle cx="1172" cy="506" r="29"/><circle cx="1185" cy="512" r="29"/><circle cx="1182" cy="544" r="29"/><circle cx="1214" cy="551" r="29"/>
      </g>
      <g transform="translate(820 270) scale(.33333)">
        <path class="holefill" d="M135,218 125,185 118,160 122,110 140,75 170,50 200,38 235,35 258,48 270,60 285,80 290,100 285,125 265,145 235,147 222,143 212,140 208,155 220,175 228,205 195,285 205,300 220,325 190,325 178,335 183,370 205,370 225,395 222,410 218,442 235,452 248,470 250,495 230,530 225,560 205,590 175,595 150,578 140,550 138,510 120,490 108,460 110,435 95,390 90,340 95,290 108,262Z"/>
        <path class="holeline" d="M135,218 125,185 118,160 122,110 140,75 170,50 200,38 235,35 258,48 270,60 285,80 290,100 285,125 265,145 235,147 222,143 212,140 208,155 220,175 228,205"/>
        <path class="holeline" d="M195,285 205,300 220,325 190,325 178,335 183,370 205,370 225,395 222,410 218,442 235,452 248,470 250,495 230,530 225,560 205,590 175,595 150,578 140,550 138,510 120,490 108,460 110,435 95,390 90,340 95,290 108,262"/>
      </g>
      <path class="hole2" d="M1110,412C1120,412 1125,420 1124,432 1123,443 1117,450 1110,450 1100,450 1094,442 1095,432 1096,420 1100,412 1110,412Z"/>
    </svg>
  </div>
</main>

<footer class="status">
  <div class="search"><svg class="sico" viewBox="0 0 16 16"><circle cx="6.500" cy="6.500" r="4.500" fill="none" stroke="#777"/><path d="M10 10l4.500 4.500" stroke="#777" stroke-width="1.300"/></svg><span>Szukana fraza (Ctrl+K)</span></div>
  <div class="msg">Włącza/wyłącza tryb edycji aktywnej warstwy</div>
  <span class="lab l-coord">Współrzędne</span>
  <div class="fld f-coord">-2430694&nbsp; 967011</div>
  <svg class="mouseico" viewBox="0 0 24 24"><path d="M7 3c4-2 10 0 10 6v8c0 4-7 6-9 2L5 9c-.5-3 0-5 2-6z" fill="#ccc" stroke="#333"/><path d="M2 4l18 18M5 14l10-9M7 18l11-10" stroke="#333"/></svg>
  <span class="lab l-skala">Skala</span>
  <div class="fld f-scale"><span class="fv">1:13047609</span><span class="combo"></span></div>
  <svg class="lock" viewBox="0 0 14 18"><path d="M3.500 8V5a3.500 3.500 0 0 1 7 0v3" fill="none" stroke="#777" stroke-width="1.600"/><rect x="1" y="7.500" width="12" height="9.500" rx="1.500" fill="#888"/></svg>
  <span class="lab l-pow">Powiększenie</span>
  <div class="fld f-zoom"><span class="fv">100%</span><span class="spin"><i class="sup"></i><i class="sdn"></i></span></div>
  <span class="lab l-obr">Obrót</span>
  <div class="fld f-rot"><span class="fv">0,0 °</span><span class="spin"><i class="sup"></i><i class="sdn"></i></span></div>
  <span class="cb cb-on cb-s">✓</span>
  <span class="lab l-ren">Renderuj</span>
  <svg class="globe" viewBox="0 0 24 24"><use href="#wms"/></svg>
  <span class="lab l-epsg">EPSG:2964</span>
  <svg class="msgico" viewBox="0 0 16 16"><path d="M8 1c4 0 7 2.500 7 6s-3 6-7 6l-3 2v-2.500C2.500 11.500 1 9.500 1 7c0-3.500 3-6 7-6z" fill="#777"/><circle cx="5" cy="7" r="1" fill="#fff"/><circle cx="8" cy="7" r="1" fill="#fff"/><circle cx="11" cy="7" r="1" fill="#fff"/></svg>
</footer>

<footer class="taskbar">
  <svg class="winlogo" viewBox="0 0 24 24"><use href="#win"/></svg>
  <div class="tsearch"><svg class="tsi" viewBox="0 0 20 20"><circle cx="12" cy="8" r="6" fill="none" stroke="#ddd" stroke-width="1.200"/><path d="M7.500 12.500L2 18" stroke="#ddd" stroke-width="1.200"/></svg><span>Wyszukaj</span></div>
  <div class="apps">
    <span class="app"><svg class="tv" viewBox="0 0 24 24"><path d="M2 3h13M2 21h13" stroke="#eee"/><rect x="2" y="7" width="13" height="10" fill="none" stroke="#eee" stroke-width="1.300"/><path d="M19 3h3v3h-3zM19 9h3v8h-3z" fill="#eee"/></svg></span>
    <span class="app"><svg class="ta" viewBox="0 0 24 24"><use href="#edge"/></svg></span>
    <span class="app mark"><svg class="ta" viewBox="0 0 24 24"><use href="#fold"/></svg></span>
    <span class="app"><svg class="ta" viewBox="0 0 24 24"><use href="#elephantg"/></svg></span>
    <span class="app"><svg class="ta" viewBox="0 0 24 24"><use href="#store"/></svg></span>
    <span class="app"><svg class="ta" viewBox="0 0 24 24"><use href="#mail"/></svg></span>
    <span class="app mark"><svg class="ta" viewBox="0 0 24 24"><use href="#teams"/></svg></span>
    <span class="app mark"><svg class="ta" viewBox="0 0 24 24"><use href="#chrome"/></svg></span>
    <span class="app mark act"><svg class="ta" viewBox="0 0 24 24"><use href="#qgis"/></svg></span>
    <span class="app mark"><svg class="ta" viewBox="0 0 24 24"><use href="#note"/></svg></span>
  </div>
  <div class="tray">
    <svg class="cloud" viewBox="0 0 28 22"><path d="M6 21a5 5 0 0 1-1-10 8 8 0 0 1 15-2 6 6 0 0 1 2 12z" fill="#a8c8ec"/><circle cx="16" cy="6" r="6" fill="#c53b30"/><text x="16" y="9.500" class="svgt b9" text-anchor="middle" fill="#fff">1</text></svg>
    <span class="temp">0°C</span>
    <svg class="chev" viewBox="0 0 12 8"><path d="M1 6.500l5-5 5 5" fill="none" stroke="#eee" stroke-width="1.200"/></svg>
    <svg class="tr tr1" viewBox="0 0 20 20"><rect x="5" y="6" width="8" height="8" rx="1" fill="none" stroke="#eee"/><path d="M13 8l3-2v8l-3-2M6 2q3-1 6 0M6 18q3 1 6 0" fill="none" stroke="#eee"/></svg>
    <svg class="tr" viewBox="0 0 20 20"><rect x="2" y="2" width="14" height="14" fill="none" stroke="#eee"/><path d="M6 6h6v7H6z" fill="none" stroke="#eee"/><circle cx="15" cy="15" r="3.500" fill="#f08c1a"/></svg>
    <svg class="tr" viewBox="0 0 20 20"><rect x="7" y="6" width="12" height="9" fill="#ddd" stroke="#eee"/><path d="M3 2v3M6 2v3M2 5h5v3l-2 2v6" fill="none" stroke="#eee"/></svg>
    <svg class="tr" viewBox="0 0 20 20"><path d="M2 17a15 15 0 0 1 15-15M6 17a11 11 0 0 1 11-11M10 17a7 7 0 0 1 7-7" fill="none" stroke="#aaa" stroke-width="1.200"/><circle cx="15" cy="16" r="1.500" fill="#eee"/></svg>
    <svg class="tr" viewBox="0 0 20 20"><path d="M2 7h3l5-4v14l-5-4H2z" fill="none" stroke="#eee"/><path d="M13 7q2 3 0 6M15.500 5q3 5 0 10" fill="none" stroke="#eee"/></svg>
    <div class="clock"><span>17:08</span><span>13.11.2024</span></div>
    <svg class="notif" viewBox="0 0 20 20"><path d="M2 2.500h16v12h-5l-3 3v-3H2z" fill="none" stroke="#eee" stroke-width="1.200"/></svg>
  </div>
</footer>
</body>
</html>
```

FILE: styles.css
```css
* { box-sizing: border-box; }
html, body { margin: 0; padding: 0; }
body {
  width: 1366px; height: 768px; overflow: hidden;
  display: flex; flex-direction: column;
  background: #f0f0f0; color: #111;
  font: 12px/1 Roboto, "Liberation Sans", sans-serif;
}
.defs { position: absolute; width: 0; height: 0; }
.svgt { font-family: "Liberation Sans", sans-serif; }
.b7 { font-size: 8px; font-weight: 700; }
.b9 { font-size: 9px; font-weight: 700; }
.b11 { font-size: 11px; font-weight: 700; }
.i12 { font: italic 700 13px "Liberation Serif", serif; }
.i15 { font: italic 700 16px "Liberation Serif", serif; }
.eps { font-size: 22px; }

.titlebar { height: 23px; background: #fff; display: flex; align-items: center; padding-left: 2px; }
.logo { width: 19px; height: 19px; }
.apptitle { margin-left: 2px; font-size: 12px; color: #222; }
.winctl { margin-left: auto; display: flex; padding-right: 19px; gap: 34px; }
.wc { width: 12px; height: 12px; }

.menubar { height: 20px; background: #f0f0f0; display: flex; align-items: center; padding-left: 11px; gap: 14px; font-size: 11.700px; }

.toolbar { height: 38px; display: flex; align-items: center; background: linear-gradient(#f6f6f6, #ececec); border-top: 1px solid #c8c8c8; }
.toolbar2 { height: 40px; border-top: 1px solid #bcbcbc; border-bottom: 1px solid #c8c8c8; }
.b { width: 33px; height: 30px; flex: none; display: flex; align-items: center; justify-content: center; position: relative; }
.b.on { background: #e1e1e1; border: 1px solid #bdbdbd; border-radius: 2px; width: 31px; margin: 0 1px; }
.b.w31 { width: 31px; }
.i { width: 24px; height: 24px; display: block; }
.off { filter: grayscale(1); opacity: .3; }
.ov { position: absolute; right: 3px; bottom: 1px; width: 0; height: 0; border: 3px solid transparent; border-top: 4px solid #555; border-bottom: 0; }
.grip { flex: none; height: 22px; position: relative; }
.grip::before { content: ""; position: absolute; left: 50%; top: 0; margin-left: -3px; width: 6px; height: 22px;
  background-image: radial-gradient(circle at 1px 1px, #b4b4b4 .8px, transparent 1px); background-size: 3px 3px; }
.g-first { width: 12.500px; }
.g14 { width: 13.500px; }
.g15 { width: 15px; }
.g16 { width: 16px; }
.g17 { width: 17px; }
.dd { flex: none; width: 12.500px; height: 24px; position: relative; }
.dd::before { content: ""; position: absolute; left: 2px; top: 10px; border: 4px solid transparent; border-top: 4px solid #444; border-bottom: 0; }
.dd-off::before { border-top-color: #c8c8c8; }
.dd-m { width: 10px; }
.dd-m::before { border-top-color: #999; left: 1px; }
.dd-s { width: 10px; }
.dd-s::before { left: 1px; border-top-color: #666; }
.vsep { flex: none; width: 7px; height: 22px; border-left: 1px solid #cfcfcf; margin-left: 4px; margin-right: -4px; }

.main { height: 578px; display: flex; background: #f0f0f0; }
.side { width: 300px; flex: none; display: flex; flex-direction: column; }
.panel { width: 294px; }
.p-browser { height: 275px; }
.vsplit { height: 7px; position: relative; }
.vsplit::before { content: ""; position: absolute; left: 140px; top: 1px; width: 16px; height: 2px;
  background-image: radial-gradient(circle at 1px 1px, #b4b4b4 .7px, transparent 1px); background-size: 3px 2px; }
.ptitle { height: 19px; display: flex; align-items: center; padding-left: 4px; font-size: 12px; }
.pbtns { margin-left: auto; display: flex; gap: 2px; padding-right: 2px; }
.pb { width: 11px; height: 11px; }
.ptools { height: 31px; display: flex; align-items: center; padding: 0 0 1px 8px; gap: 9px; }
.t { width: 16px; height: 16px; flex: none; }
.pt-l { padding: 0 0 1px 8px; height: 28px; }
.pt-l .dd-s { height: 16px; margin-left: -6px; margin-right: -1px; }
.pt-l .dd-s::before { top: 6px; }
.listbox { border: 1px solid #a8a8a8; background: #fff; display: flex; overflow: hidden; width: 294px; }
.lb-browser { height: 225px; }
.lb-layers { height: 247px; margin-top: 2px; }
.tree, .layers { list-style: none; margin: 0; padding: 0; flex: 1; overflow: hidden; min-width: 0; }
.tree li { height: 18px; display: flex; align-items: center; font-size: 11.500px; color: #111; }
.tl { padding-top: 1px; }
.tree { padding-top: 1px; }
.arrow, .noarrow { flex: none; width: 19px; height: 18px; position: relative; }
.arrow::before { content: ""; position: absolute; left: 5px; top: 5px; border-left: 5px solid #444; border-top: 4px solid transparent; border-bottom: 4px solid transparent; }
.ti { width: 16px; height: 16px; flex: none; margin-right: 6px; }

.sbar { width: 14px; flex: none; display: flex; flex-direction: column; background: #e8e8e8; border-left: 1px solid #d8d8d8; }
.up, .down { height: 14px; background: #fafafa; position: relative; flex: none; }
.up::before { content: ""; position: absolute; left: 3px; top: 4px; border: 4px solid transparent; border-bottom: 4px solid #444; border-top: 0; }
.down::before { content: ""; position: absolute; left: 3px; top: 5px; border: 4px solid transparent; border-top: 4px solid #444; border-bottom: 0; }
.track { flex: 1; background: #e6e6e6; }
.track.t1 { flex: none; height: 11px; }
.thumb { background: #fcfcfc; flex: none; }
.sb-b .thumb { height: 130px; }
.sb-l .thumb { height: 130px; }

.layers li { height: 18px; display: flex; align-items: center; position: relative; }
.cb { flex: none; width: 14px; height: 14px; border: 1px solid #bbb; background: #fff; margin-left: 23px; display: flex; align-items: center; justify-content: center; font: 700 12px "DejaVu Sans", sans-serif; color: #111; }
.cb-on { border-color: #777; }
.sw { flex: none; width: 16px; height: 16px; margin-left: 6px; border: 1px solid #333; }
.c-green { background: #6f9a6f; }
.c-orange { background: #ff9e17; border-color: #a8650b; }
.c-purple { background: #8d5a99; }
.c-coral { background: #e8744a; }
.dotw, .linew { flex: none; width: 16px; margin-left: 6px; display: flex; align-items: center; justify-content: center; }
.dot { width: 8px; height: 8px; border-radius: 50%; border: 1px solid #444; display: block; }
.d-olive { background: #b5b83f; }
.d-gold { background: #e0a72a; }
.d-green { background: #5f9060; }
.d-red { background: #e31a1c; }
.lin { display: block; width: 14px; height: 2px; background: #b5917a; }
.ed { width: 16px; height: 17px; }
.ln { margin-left: 6px; font: italic 700 12px "Open Sans", "Liberation Sans", sans-serif; color: #808080; white-space: nowrap; }
.lnl { margin-left: 4px; }
.active .ln { font: 700 12px Roboto, "Liberation Sans", sans-serif; color: #000; }
.sel { background: linear-gradient(90deg, #0078d7 0 61px, #1583dc 61px); }
.sel .ln { color: #fff; text-decoration: underline; }
.sel .lin { background: #9c8f8f; }
.mem { position: absolute; left: 257px; top: 1px; width: 17px; height: 16px; }

.canvas { flex: 1; background: #fff; border-left: 1px solid #a8a8a8; border-top: 1px solid #a8a8a8; min-width: 0; overflow: hidden; }
.mapsvg { display: block; width: 1065px; height: 577px; }
.blobs circle { fill: #71996f; stroke: #2c2c2c; stroke-width: .9; }
.holefill { fill: #fff; stroke: none; }
.holeline { fill: none; stroke: #2c2c2c; stroke-width: 2.700; stroke-linejoin: round; }
.hole2 { fill: #fff; stroke: #2c2c2c; stroke-width: .9; }

.status { height: 29px; display: flex; align-items: center; background: #f0f0f0; font-size: 11px; border-top: 1px solid #d6d6d6; }
.status > * { flex: none; }
.search { width: 199px; height: 22px; margin-left: 4px; background: #fff; border: 1px solid #c4c4c4; border-radius: 3px; display: flex; align-items: center; padding-left: 6px; color: #888; }
.sico { width: 14px; height: 14px; margin-right: 7px; }
.msg { margin-left: 9px; width: 323px; white-space: nowrap; }
.fld { height: 21px; background: #fff; border: 1px solid #c4c4c4; border-radius: 3px; display: flex; align-items: center; }
.f-coord { width: 109px; margin-left: 3px; justify-content: center; }
.mouseico { width: 16px; height: 18px; margin-left: 4px; }
.l-coord { width: 63px; }
.l-skala { margin-left: 12px; width: 25px; }
.f-scale { width: 80px; margin-left: 4px; }
.fv { padding-left: 1px; flex: 1; overflow: hidden; white-space: nowrap; }
.f-zoom .fv, .f-rot .fv { padding-left: 3px; }
.combo { width: 20px; height: 100%; border-left: 1px solid #d0d0d0; position: relative; flex: none; }
.combo::before { content: ""; position: absolute; left: 5px; top: 8px; border: 4px solid transparent; border-top: 4px solid #555; border-bottom: 0; }
.lock { width: 13px; height: 17px; margin-left: 12.500px; }
.l-pow { margin-left: 7.500px; width: 64px; letter-spacing: -.1px; }
.f-zoom { width: 82px; margin-left: 4px; }
.l-obr { margin-left: 9px; width: 29px; }
.f-rot { width: 83px; margin-left: 10px; }
.spin { width: 13px; height: 100%; border-left: 1px solid #d0d0d0; display: flex; flex-direction: column; align-items: center; justify-content: center; gap: 2px; flex: none; }
.sup { border: 4px solid transparent; border-bottom: 4px solid #555; border-top: 0; width: 0; height: 0; }
.sdn { border: 4px solid transparent; border-top: 4px solid #555; border-bottom: 0; width: 0; height: 0; }
.cb-s { margin-left: 7px; width: 13px; height: 13px; font-size: 11px; }
.l-ren { margin-left: 4px; width: 45px; }
.globe { width: 14px; height: 14px; margin-left: 17px; }
.l-epsg { margin-left: 1px; width: 54px; }
.msgico { width: 16px; height: 16px; margin-left: 23px; }
.lab { white-space: nowrap; }

.taskbar { height: 40px; background: #201b1d; display: flex; align-items: center; color: #eee; position: relative; }
.winlogo { width: 16px; height: 16px; margin-left: 16px; flex: none; }
.tsearch { width: 288px; height: 40px; margin-left: 16px; background: #333; border: 1px solid #5a5a5a; border-bottom: 0; display: flex; align-items: center; padding-left: 11px; font-size: 14px; color: #ddd; flex: none; }
.tsi { width: 18px; height: 18px; margin-right: 10px; }
.apps { display: flex; height: 40px; margin-left: 1px; }
.app { width: 49px; height: 40px; display: flex; align-items: center; justify-content: center; position: relative; flex: none; }
.app.mark::after { content: ""; position: absolute; left: 5px; right: 5px; bottom: 0; height: 2px; background: #76b9ed; }
.app.act { background: #3b3637; }
.app.act::after { left: 0; right: 0; }
.ta { width: 26px; height: 26px; }
.tv { width: 18px; height: 18px; }
.tray { margin-left: auto; display: flex; align-items: center; height: 40px; padding-right: 24px; }
.cloud { width: 27px; height: 22px; }
.temp { font-size: 13.500px; margin-left: 6px; }
.chev { width: 12px; height: 8px; margin-left: 24px; }
.tr { width: 16px; height: 16px; margin-left: 8px; }
.tr1 { margin-left: 11px; }
.clock { display: flex; flex-direction: column; align-items: center; gap: 5px; margin-left: 6px; font-size: 12px; width: 62px; }
.notif { width: 18px; height: 18px; margin-left: 12px; }
```
